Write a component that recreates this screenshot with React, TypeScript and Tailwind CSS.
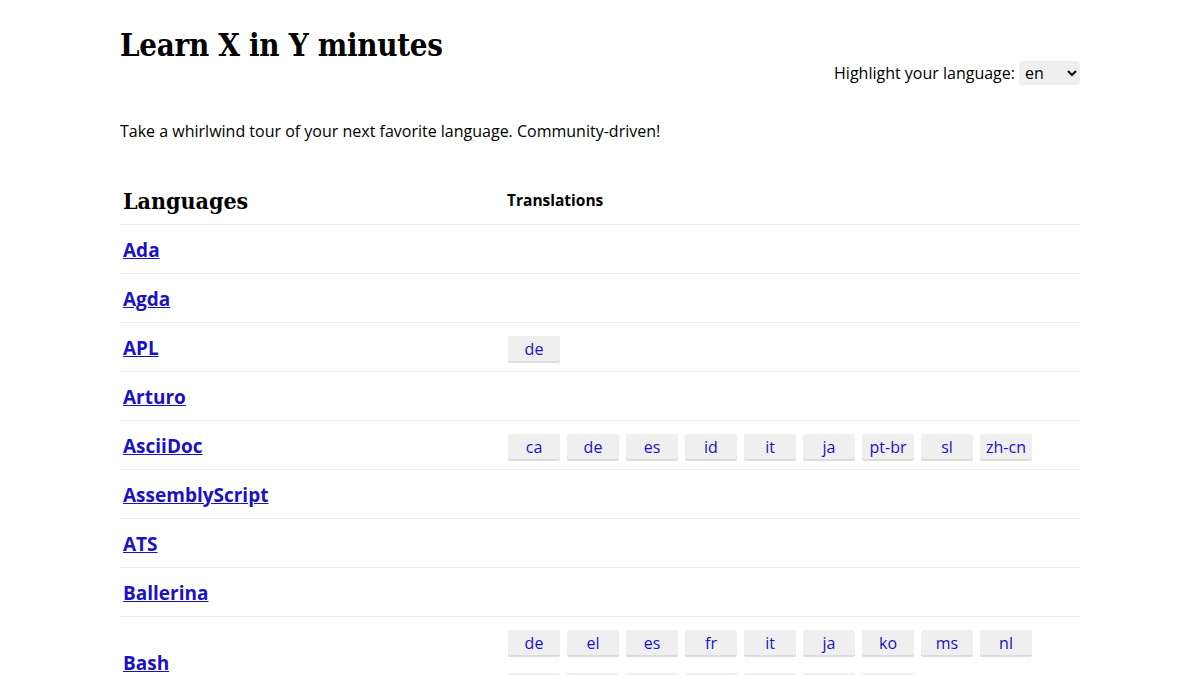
import React from 'react';

type Lang = { name: string; translations: string[] };

const languages: Lang[] = [
  { name: 'Ada', translations: [] },
  { name: 'Agda', translations: [] },
  { name: 'APL', translations: ['de'] },
  { name: 'Arturo', translations: [] },
  { name: 'AsciiDoc', translations: ['ca', 'de', 'es', 'id', 'it', 'ja', 'pt-br', 'sl', 'zh-cn'] },
  { name: 'AssemblyScript', translations: [] },
  { name: 'ATS', translations: [] },
  { name: 'Ballerina', translations: [] },
  { name: 'Bash', translations: ['de', 'el', 'es', 'fr', 'it', 'ja', 'ko', 'ms', 'nl', 'pl', 'pt-br', 'ru', 'sv', 'tr', 'uk', 'zh-cn'] },
];

const slab = { fontFamily: '"DejaVu Serif Condensed", "DejaVu Serif", serif' };

export default function App() {
  const [lang, setLang] = React.useState('en');

  return (
    <div className="h-screen overflow-hidden bg-white text-black" style={{ fontFamily: '"Open Sans", sans-serif' }}>
      <div className="mx-auto w-[960px] pt-[25px]">
        <h1 className="text-[31px] font-bold leading-[40px] tracking-[-0.3px]" style={slab}>
          Learn X in Y minutes
        </h1>

        <div className="mt-[-4px] flex items-center justify-end gap-[4px] text-[16px]">
          <span>Highlight your language:</span>
          <select
            value={lang}
            onChange={(event) => setLang(event.target.value)}
            className="h-[24px] w-[61px] rounded-sm bg-[#efefef] px-[2px] text-[16px] leading-[24px]"
          >
            <option>en</option>
            <option>de</option>
            <option>es</option>
          </select>
        </div>

        <p className="mt-[35px] text-[16px] leading-[22px]">
          Take a whirlwind tour of your next favorite language. Community-driven!
        </p>

        <div className="mt-[34px]">
          <div className="flex h-[49px] items-center border-b border-[#eeeeee] pt-[2px]">
            <div className="w-[387px] pl-[3px] text-[23px] font-bold" style={slab}>Languages</div>
            <div className="text-[15.5px] font-bold">Translations</div>
          </div>

          {languages.map((item) => (
            <div key={item.name} className="flex min-h-[49px] items-center border-b border-[#eeeeee]">
              <div className="w-[387px] pl-[3px] pt-[1px]">
                <a href="#" className="text-[19px] font-bold leading-[26px] text-[#1a12c4] underline">
                  {item.name}
                </a>
              </div>
              {item.translations.length > 0 && (
                <div className="flex w-[540px] flex-wrap gap-x-[7px] gap-y-[18px] pb-[10px] pl-[1px] pt-[13px]">
                  {item.translations.map((code) => (
                    <a
                      key={code}
                      href="#"
                      className="flex h-[25px] min-w-[52px] items-center justify-center rounded-[2px] bg-[#efefef] px-[6px] text-[16px] text-[#1a12c4] shadow-[0_2px_0_#dcdcdc]"
                    >
                      {code}
                    </a>
                  ))}
                </div>
              )}
            </div>
          ))}
        </div>
      </div>
    </div>
  );
}
